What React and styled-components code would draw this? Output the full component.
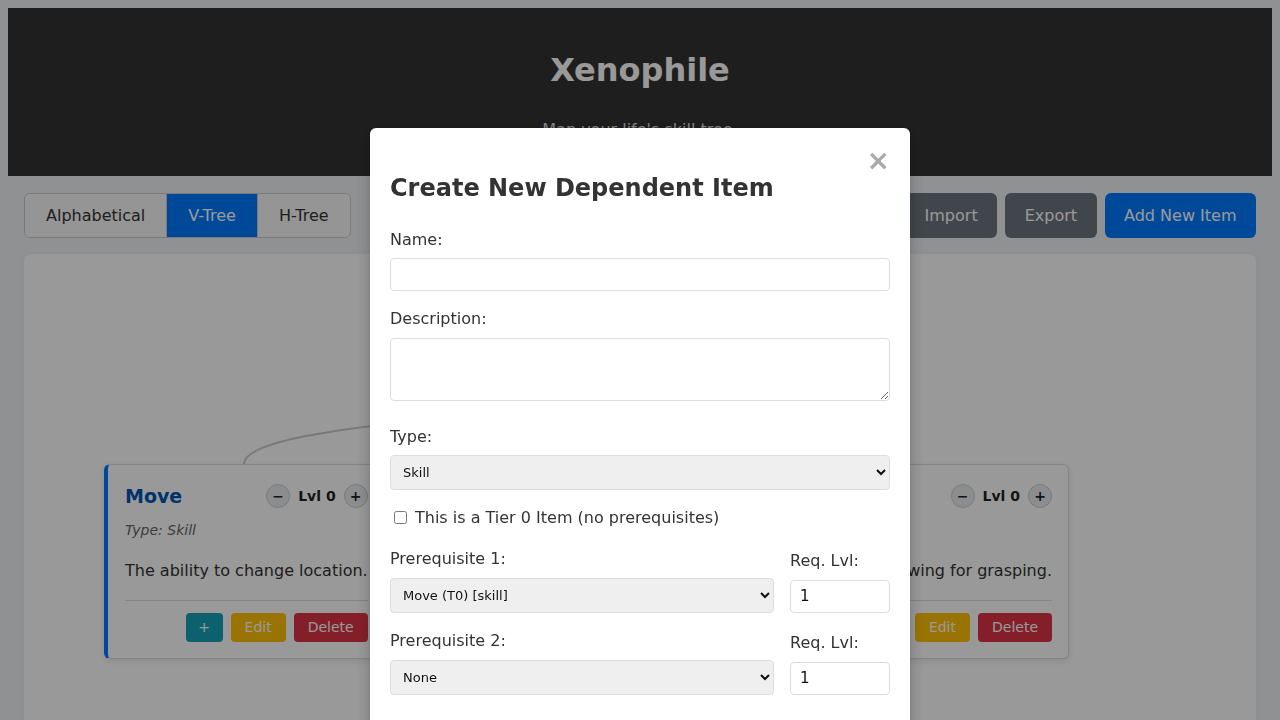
import React from "react";
import styled, { createGlobalStyle, css } from "styled-components";

const GlobalStyle = createGlobalStyle`
  * { box-sizing: border-box; }
  html { overflow: hidden; }
  body {
    margin: 8px;
    background: #f0f2f5;
    font-family: "DejaVu Sans", sans-serif;
    color: #333;
  }
  button, input, select, textarea { font-family: "DejaVu Sans", sans-serif; }
`;

/* ---------- Header ---------- */
const Header = styled.header`
  background: #333;
  color: #fff;
  text-align: center;
  padding: 20px;
`;
const AppTitle = styled.h1`
  font-size: 32px;
  line-height: 38px;
  font-weight: bold;
  margin: 23px 0 31px;
`;
const Subtitle = styled.p`
  font-size: 16px;
  line-height: 19px;
  margin: 0 0 17px;
  color: rgba(255, 255, 255, 0.85);
`;

/* ---------- Main / toolbar ---------- */
const Main = styled.main`
  padding: 0 16px;
`;
const Toolbar = styled.div`
  display: flex;
  justify-content: space-between;
  align-items: center;
  margin: 17px 0 16px;
`;
const ViewGroup = styled.div`
  display: flex;
  border: 1px solid #ccc;
  border-radius: 6px;
  overflow: hidden;
`;
const ViewButton = styled.button`
  padding: 12px 21px;
  font-size: 16px;
  line-height: 19px;
  border: none;
  border-left: 1px solid #ccc;
  background: ${(p) => (p.$active ? "#007bff" : "#f8f9fa")};
  color: ${(p) => (p.$active ? "#fff" : "#333")};
  &:first-child { border-left: none; }
`;
const Actions = styled.div`
  display: flex;
  gap: 8px;
`;
const ActionButton = styled.button`
  padding: 13px 19.5px;
  font-size: 16px;
  line-height: 19px;
  border: none;
  border-radius: 6px;
  color: #fff;
  background: ${(p) => (p.$primary ? "#007bff" : "#6c757d")};
`;

/* ---------- Tree panel ---------- */
const Panel = styled.section`
  position: relative;
  height: 560px;
  background: #fff;
  border-radius: 8px;
  box-shadow: 0 2px 8px rgba(0, 0, 0, 0.06);
`;
const Connectors = styled.svg`
  position: absolute;
  inset: 0;
  width: 100%;
  height: 100%;
  pointer-events: none;
`;
const NodeCard = styled.div`
  position: absolute;
  top: ${(p) => p.$top}px;
  ${(p) =>
    p.$center
      ? css`left: 50%; transform: translateX(-50%);`
      : p.$right !== undefined
      ? css`right: ${p.$right}px;`
      : css`left: ${p.$left}px;`}
  background: #fff;
  border: 1px solid #ddd;
  border-left: 4px solid #007bff;
  border-radius: 6px;
  padding: 16px 16px 16px 17px;
  box-shadow: 0 2px 6px rgba(0, 0, 0, 0.1);
  white-space: nowrap;
`;
const CardHeader = styled.div`
  display: flex;
  align-items: center;
  justify-content: space-between;
  gap: 16px;
  height: 30px;
  margin-bottom: 11px;
`;
const NodeTitle = styled.h3`
  margin: 0;
  font-size: 19px;
  line-height: 22px;
  font-weight: bold;
  color: #0056b3;
`;
const LevelControl = styled.div`
  display: flex;
  align-items: center;
  gap: 8px;
`;
const LevelButton = styled.button`
  width: 24px;
  height: 24px;
  padding: 0;
  border-radius: 50%;
  border: 1px solid #ccc;
  background: #e9ecef;
  color: #222;
  font-size: 14px;
  font-weight: bold;
  line-height: 1;
  display: flex;
  align-items: center;
  justify-content: center;
`;
const LevelText = styled.span`
  font-size: 14px;
  font-weight: bold;
  color: #222;
`;
const NodeType = styled.p`
  margin: 0 0 23px;
  font-size: 14px;
  line-height: 16px;
  font-style: italic;
  color: #666;
`;
const NodeDesc = styled.p`
  margin: 0 0 20px;
  font-size: 16px;
  line-height: 19px;
  color: #333;
`;
const CardActions = styled.div`
  display: flex;
  justify-content: flex-end;
  gap: 8px;
  border-top: 1px solid #ddd;
  padding-top: 12px;
`;
const variants = {
  info: "#17a2b8",
  warning: "#ffc107",
  danger: "#dc3545",
};
const SmallButton = styled.button`
  padding: 6px ${(p) => (p.$narrow ? 12.5 : 14)}px;
  font-size: 14px;
  line-height: 17px;
  border: none;
  border-radius: 4px;
  color: #fff;
  background: ${(p) => variants[p.$variant]};
`;

/* ---------- Modal ---------- */
const Overlay = styled.div`
  position: fixed;
  inset: 0;
  background: rgba(0, 0, 0, 0.4);
  z-index: 10;
  overflow: hidden;
`;
const ModalBox = styled.div`
  position: relative;
  width: 540px;
  margin: 128px auto 0;
  background: #fff;
  border-radius: 6px;
  padding: 20px;
  box-shadow: 0 4px 16px rgba(0, 0, 0, 0.25);
`;
const CloseButton = styled.span`
  position: absolute;
  top: 19px;
  right: 20px;
  font-size: 28px;
  line-height: 28px;
  font-weight: bold;
  color: #aaa;
  cursor: pointer;
`;
const ModalTitle = styled.h2`
  margin: 26px 0 27.5px;
  font-size: 24px;
  line-height: 28px;
  font-weight: bold;
  color: #333;
`;
const FormGroup = styled.div`
  margin-bottom: ${(p) => p.$mb ?? 18}px;
`;
const Label = styled.label`
  display: block;
  font-size: 16px;
  line-height: 19px;
  margin-bottom: 9.5px;
  color: #333;
`;
const TextInput = styled.input`
  display: block;
  width: 100%;
  height: 33px;
  padding: 6px 9px;
  font-size: 15px;
  border: 1px solid #ddd;
  border-radius: 4px;
  background: #fff;
  color: #111;
`;
const TextArea = styled.textarea`
  display: block;
  width: 100%;
  height: 63px;
  padding: 6px 9px;
  font-size: 16px;
  border: 1px solid #ddd;
  border-radius: 4px;
  resize: vertical;
`;
const Select = styled.select`
  display: block;
  width: 100%;
  height: 35px;
  padding: 0 8px;
  font-size: 13px;
  border: 1px solid #ddd;
  border-radius: 4px;
  background-color: #efefef;
  color: #111;
`;
const CheckRow = styled.label`
  display: flex;
  align-items: center;
  height: 19px;
  font-size: 16px;
  margin-bottom: 22px;
  color: #333;
  input { margin: 0 8px 0 4px; width: 13px; height: 13px; }
`;
const PrereqRow = styled.div`
  display: flex;
  align-items: flex-end;
  gap: 16px;
  margin-bottom: 18.5px;
`;
const PrereqMain = styled.div`
  flex: 1;
`;
const PrereqLevel = styled.div`
  width: 100px;
`;
const ModalFooter = styled.div`
  display: flex;
  justify-content: flex-end;
  padding-top: 24px;
`;
const SubmitButton = styled.button`
  padding: 10px 20px;
  font-size: 16px;
  border: none;
  border-radius: 4px;
  background: #28a745;
  color: #fff;
`;

function TreeNode({ title, type, desc, ...pos }) {
  return (
    <NodeCard {...pos}>
      <CardHeader>
        <NodeTitle>{title}</NodeTitle>
        <LevelControl>
          <LevelButton>−</LevelButton>
          <LevelText>Lvl 0</LevelText>
          <LevelButton>+</LevelButton>
        </LevelControl>
      </CardHeader>
      <NodeType>Type: {type}</NodeType>
      <NodeDesc>{desc}</NodeDesc>
      <CardActions>
        <SmallButton $variant="info" $narrow>+</SmallButton>
        <SmallButton $variant="warning">Edit</SmallButton>
        <SmallButton $variant="danger">Delete</SmallButton>
      </CardActions>
    </NodeCard>
  );
}

function PrereqField({ n, value }) {
  return (
    <PrereqRow>
      <PrereqMain>
        <Label>Prerequisite {n}:</Label>
        <Select defaultValue={value}>
          <option value="none">None</option>
          <option value="move">Move (T0) [skill]</option>
          <option value="grab">Grab (T0) [skill]</option>
        </Select>
      </PrereqMain>
      <PrereqLevel>
        <Label>Req. Lvl:</Label>
        <TextInput type="number" defaultValue="1" />
      </PrereqLevel>
    </PrereqRow>
  );
}

export default function App() {
  return (
    <>
      <GlobalStyle />
      <Header>
        <AppTitle>Xenophile</AppTitle>
        <Subtitle>Map your life's skill tree.</Subtitle>
      </Header>
      <Main>
        <Toolbar>
          <ViewGroup>
            <ViewButton>Alphabetical</ViewButton>
            <ViewButton $active>V-Tree</ViewButton>
            <ViewButton>H-Tree</ViewButton>
          </ViewGroup>
          <Actions>
            <ActionButton>Import</ActionButton>
            <ActionButton>Export</ActionButton>
            <ActionButton $primary>Add New Item</ActionButton>
          </Actions>
        </Toolbar>
        <Panel>
          <Connectors>
            <path
              d="M220,210 C220,163 616,163 616,116"
              fill="none"
              stroke="#ccc"
              strokeWidth="2"
            />
          </Connectors>
          <TreeNode $center $top={30} title="Body" type="Attribute" desc="The physical vessel." />
          <TreeNode $left={80} $top={210} title="Move" type="Skill" desc="The ability to change location." />
          <TreeNode
            $right={187}
            $top={210}
            title="Grab"
            type="Skill"
            desc="The ability to use hands, allowing for grasping."
          />
        </Panel>
      </Main>
      <Overlay>
        <ModalBox>
          <CloseButton>×</CloseButton>
          <ModalTitle>Create New Dependent Item</ModalTitle>
          <FormGroup>
            <Label>Name:</Label>
            <TextInput type="text" />
          </FormGroup>
          <FormGroup $mb={26}>
            <Label>Description:</Label>
            <TextArea />
          </FormGroup>
          <FormGroup>
            <Label>Type:</Label>
            <Select defaultValue="skill">
              <option value="skill">Skill</option>
              <option value="attribute">Attribute</option>
              <option value="knowledge">Knowledge</option>
            </Select>
          </FormGroup>
          <CheckRow>
            <input type="checkbox" />
            This is a Tier 0 Item (no prerequisites)
          </CheckRow>
          <PrereqField n={1} value="move" />
          <PrereqField n={2} value="none" />
          <ModalFooter>
            <SubmitButton>Create Item</SubmitButton>
          </ModalFooter>
        </ModalBox>
      </Overlay>
    </>
  );
}
